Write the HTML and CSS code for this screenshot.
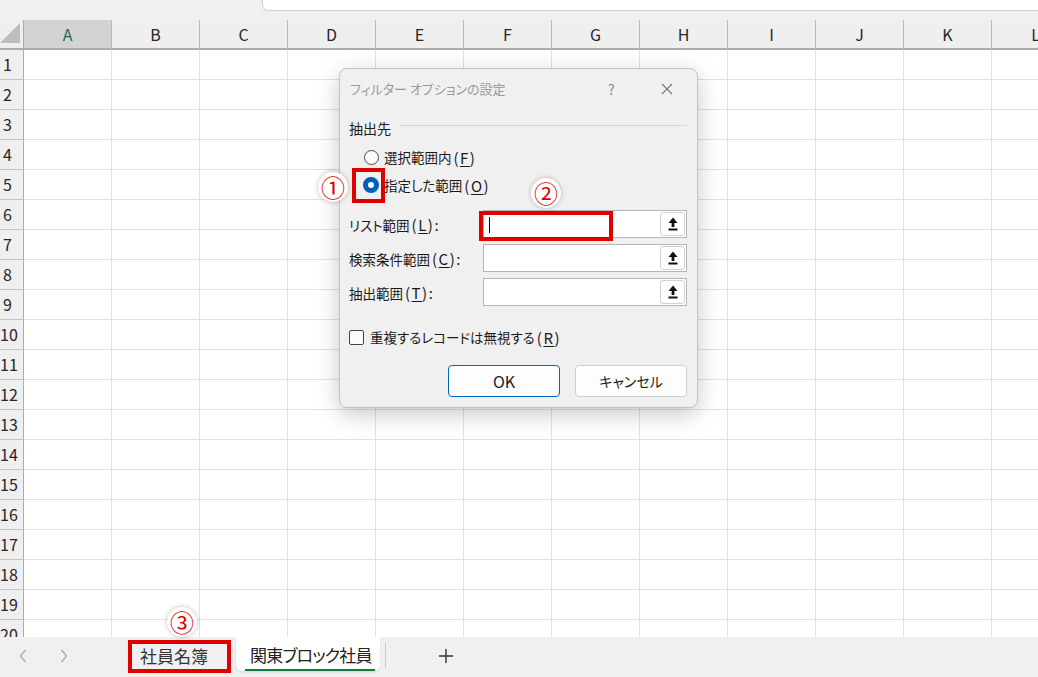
FILE: index.html
```html
<!DOCTYPE html>
<html lang="ja">
<head>
    <meta charset="UTF-8">
    <meta name="viewport" content="width=device-width, initial-scale=1.0">
    <title>フィルター オプションの設定</title>
    <link rel="stylesheet" href="styles.css">
</head>
<body>
    <div class="app">
        <div class="topbar"><div class="namebox"></div></div>
        <div class="sheet">
            <div class="row head">
                <div class="corner"><svg width="20" height="22" viewBox="0 0 20 22"><polygon points="20,0 20,20 0,20" fill="#bdbdbd"/></svg></div>
                <div class="col sel">A</div>
                <div class="col">B</div>
                <div class="col">C</div>
                <div class="col">D</div>
                <div class="col">E</div>
                <div class="col">F</div>
                <div class="col">G</div>
                <div class="col">H</div>
                <div class="col">I</div>
                <div class="col">J</div>
                <div class="col">K</div>
                <div class="col">L</div>
            </div>
            <div class="row"><div class="num"><span>1</span></div><div class="cells"></div></div>
            <div class="row"><div class="num"><span>2</span></div><div class="cells"></div></div>
            <div class="row"><div class="num"><span>3</span></div><div class="cells"></div></div>
            <div class="row"><div class="num"><span>4</span></div><div class="cells"></div></div>
            <div class="row"><div class="num"><span>5</span></div><div class="cells"></div></div>
            <div class="row"><div class="num"><span>6</span></div><div class="cells"></div></div>
            <div class="row"><div class="num"><span>7</span></div><div class="cells"></div></div>
            <div class="row"><div class="num"><span>8</span></div><div class="cells"></div></div>
            <div class="row"><div class="num"><span>9</span></div><div class="cells"></div></div>
            <div class="row"><div class="num"><span>10</span></div><div class="cells"></div></div>
            <div class="row"><div class="num"><span>11</span></div><div class="cells"></div></div>
            <div class="row"><div class="num"><span>12</span></div><div class="cells"></div></div>
            <div class="row"><div class="num"><span>13</span></div><div class="cells"></div></div>
            <div class="row"><div class="num"><span>14</span></div><div class="cells"></div></div>
            <div class="row"><div class="num"><span>15</span></div><div class="cells"></div></div>
            <div class="row"><div class="num"><span>16</span></div><div class="cells"></div></div>
            <div class="row"><div class="num"><span>17</span></div><div class="cells"></div></div>
            <div class="row"><div class="num"><span>18</span></div><div class="cells"></div></div>
            <div class="row"><div class="num"><span>19</span></div><div class="cells"></div></div>
            <div class="row"><div class="num"><span>20</span></div><div class="cells"></div></div>
        </div>
        <div class="tabbar">
            <div class="arrow"><svg width="8" height="14" viewBox="0 0 8 14"><polyline points="6.5,1 1.5,7 6.5,13" fill="none" stroke="#a8a8a8" stroke-width="1.2"/></svg></div>
            <div class="arrow"><svg width="8" height="14" viewBox="0 0 8 14"><polyline points="1.5,1 6.5,7 1.5,13" fill="none" stroke="#a8a8a8" stroke-width="1.2"/></svg></div>
            <div class="tab">社員名簿</div>
            <div class="tab active"><span>関東ブロック社員</span></div>
            <div class="tab-sep"></div>
            <div class="add"><svg width="14" height="14" viewBox="0 0 14 14"><path d="M7 0v14M0 7h14" stroke="#333" stroke-width="1.4"/></svg></div>
        </div>
    </div>

    <div class="dialog">
        <div class="dlg-title">
            <span class="dlg-name">フィルター オプションの設定</span>
            <span class="dlg-help">?</span>
            <span class="dlg-close"><svg width="12" height="12" viewBox="0 0 12 12"><path d="M1 1l10 10M11 1L1 11" stroke="#777" stroke-width="1.1"/></svg></span>
        </div>
        <div class="group">抽出先</div>
        <div class="radio-row"><span class="radio"></span>選択範囲内<span class="key">(<u>F</u>)</span></div>
        <div class="radio-row"><span class="radio on"></span>指定した範囲<span class="key">(<u>O</u>)</span></div>
        <div class="field first">
            <label>リスト範囲<span class="key">(<u>L</u>):</span></label>
            <div class="ref"><span class="caret"></span><span class="ref-btn"><svg width="10" height="14" viewBox="0 0 10 14"><polygon points="5,0.5 9.5,6 6.4,6 6.4,10 3.6,10 3.6,6 0.5,6" fill="#111"/><rect x="0.5" y="11.5" width="9" height="2" fill="#111"/></svg></span></div>
        </div>
        <div class="field">
            <label>検索条件範囲<span class="key">(<u>C</u>):</span></label>
            <div class="ref"><span class="ref-btn"><svg width="10" height="14" viewBox="0 0 10 14"><polygon points="5,0.5 9.5,6 6.4,6 6.4,10 3.6,10 3.6,6 0.5,6" fill="#111"/><rect x="0.5" y="11.5" width="9" height="2" fill="#111"/></svg></span></div>
        </div>
        <div class="field">
            <label>抽出範囲<span class="key">(<u>T</u>):</span></label>
            <div class="ref"><span class="ref-btn"><svg width="10" height="14" viewBox="0 0 10 14"><polygon points="5,0.5 9.5,6 6.4,6 6.4,10 3.6,10 3.6,6 0.5,6" fill="#111"/><rect x="0.5" y="11.5" width="9" height="2" fill="#111"/></svg></span></div>
        </div>
        <div class="check-row"><span class="check"></span>重複するレコードは無視する<span class="key">(<u>R</u>)</span></div>
        <div class="buttons">
            <button class="btn ok">OK</button>
            <button class="btn">キャンセル</button>
        </div>
    </div>

    <div class="mark mark-radio"></div>
    <div class="mark mark-list"></div>
    <div class="mark mark-tab"></div>
    <span class="badge badge-1">①</span>
    <span class="badge badge-2">②</span>
    <span class="badge badge-3">③</span>
</body>
</html>
```

FILE: styles.css
```css
body {
    margin: 0;
    width: 1038px;
    height: 677px;
    overflow: hidden;
    position: relative;
    background: #fff;
    font-family: "Noto Sans CJK JP", "Noto Sans", sans-serif;
    color: #1a1a1a;
}
.app {
    display: flex;
    flex-direction: column;
    height: 677px;
}
.topbar {
    height: 20px;
    flex: none;
    background: #f0f0f0;
}
.namebox {
    margin-left: 262px;
    height: 11px;
    background: #fff;
    border-left: 1px solid #d1d1d1;
    border-bottom: 1px solid #d1d1d1;
    border-bottom-left-radius: 6px;
    box-sizing: border-box;
}

/* grid */
.sheet {
    flex: 1;
    overflow: hidden;
}
.row {
    display: flex;
    height: 30px;
}
.head {
    background: #efefef;
}
.corner {
    width: 24px;
    flex: none;
    box-sizing: border-box;
    border-right: 1px solid #ababab;
    border-bottom: 2px solid #ababab;
    display: flex;
    align-items: flex-end;
    justify-content: flex-end;
    padding: 0 3px 3px 0;
}
.col {
    width: 88px;
    flex: none;
    box-sizing: border-box;
    border-right: 1px solid #b8b8b8;
    border-bottom: 2px solid #ababab;
    text-align: center;
    font-size: 16px;
    line-height: 28px;
    color: #262626;
}
.col.sel {
    background: #d3d3d3;
    color: #1f6a48;
}
.num {
    width: 24px;
    flex: none;
    box-sizing: border-box;
    background: #efefef;
    border-right: 1px solid #ababab;
    border-bottom: 1px solid #c4c4c4;
    font-size: 16px;
    line-height: 29px;
    color: #262626;
}
.num span {
    display: block;
    width: 15px;
    text-align: center;
    white-space: nowrap;
}
.cells {
    flex: 1;
    box-sizing: border-box;
    border-bottom: 1px solid #e1e1e1;
    background: repeating-linear-gradient(to right, transparent 0 87px, #e1e1e1 87px 88px);
}

/* sheet tabs */
.tabbar {
    height: 40px;
    flex: none;
    display: flex;
    align-items: flex-start;
    background: #f0f0f0;
    padding-left: 2px;
    font-feature-settings: "palt";
}
.arrow {
    width: 41px;
    height: 38px;
    display: flex;
    align-items: center;
    justify-content: center;
}
.tab {
    margin-left: 44px;
    width: 102px;
    height: 34px;
    margin-top: 2px;
    box-sizing: border-box;
    padding-left: 12px;
    font-size: 17px;
    line-height: 34px;
    color: #333;
}
.tab.active {
    margin-left: 6px;
    margin-top: 0;
    width: 144px;
    height: 34px;
    padding-left: 9px;
    background: #fff;
    border-radius: 0 0 6px 6px;
    box-shadow: 0 1px 2px rgba(0,0,0,0.12);
    line-height: 36px;
    color: #222;
    letter-spacing: -0.8px;
}
.tab.active span {
    display: inline-block;
    padding: 0 3px 0 5px;
    line-height: 28px;
    border-bottom: 2px solid #107c41;
}
.tab-sep {
    width: 1px;
    height: 25px;
    margin: 6px 0 0 5px;
    background: #c8c8c8;
}
.add {
    margin-left: 40px;
    width: 40px;
    height: 38px;
    display: flex;
    align-items: center;
    justify-content: center;
}

/* dialog */
.dialog {
    position: absolute;
    left: 339px;
    top: 68px;
    width: 359px;
    height: 340px;
    box-sizing: border-box;
    padding: 0 10px 0 9px;
    background: #f0f0f0;
    border: 1px solid #c2c2c2;
    border-radius: 8px;
    box-shadow: 0 6px 22px rgba(0,0,0,0.22);
    font-size: 13.5px;
    font-feature-settings: "palt";
}
.key {
    font-size: 15px;
    letter-spacing: 1.5px;
    margin-left: 2px;
}
.key u {
    text-underline-offset: 2px;
}
.dlg-title {
    height: 39px;
    display: flex;
    align-items: center;
    font-size: 13px;
}
.dlg-name {
    flex: 1;
    color: #9a9a9a;
    padding-left: 1px;
}
.dlg-help {
    color: #8a8a8a;
    font-size: 14px;
    width: 20px;
    margin-right: 29px;
}
.dlg-close {
    width: 20px;
    display: flex;
    justify-content: center;
    margin-right: 10px;
}
.group {
    margin-top: 10px;
    height: 20px;
    display: flex;
    align-items: center;
    gap: 8px;
    font-size: 14px;
}
.group::after {
    content: "";
    flex: 1;
    height: 1px;
    background: #d6d6d6;
    margin-top: -5px;
}
.radio-row {
    height: 28px;
    display: flex;
    align-items: center;
    padding-left: 15px;
}
.group + .radio-row {
    margin-top: 5px;
}
.radio {
    width: 15px;
    height: 15px;
    border: 1px solid #4a4a4a;
    border-radius: 50%;
    margin-right: 5px;
    box-sizing: border-box;
    background: #fbfbfb;
}
.radio.on {
    width: 16px;
    height: 16px;
    margin-left: -1px;
    margin-right: 5px;
    border: 5.5px solid #005fb8;
    background: #fff;
}
.field {
    display: flex;
    align-items: center;
    height: 28px;
    margin-top: 6px;
}
.field.first {
    margin-top: 11px;
}
.field label {
    width: 134px;
}
.ref {
    flex: 1;
    height: 28px;
    box-sizing: border-box;
    background: #fff;
    border: 1px solid #b5b5b5;
    display: flex;
    align-items: center;
    justify-content: flex-end;
    position: relative;
    padding-right: 1px;
}
.caret {
    position: absolute;
    left: 5px;
    top: 6px;
    width: 1px;
    height: 16px;
    background: #000;
}
.ref-btn {
    width: 25px;
    height: 24px;
    box-sizing: border-box;
    border: 1px solid #d2d2d2;
    border-radius: 3px;
    background: #fdfdfd;
    display: flex;
    align-items: center;
    justify-content: center;
}
.check-row {
    height: 28px;
    margin-top: 17px;
    display: flex;
    align-items: center;
}
.check {
    width: 15px;
    height: 15px;
    box-sizing: border-box;
    border: 1px solid #444;
    border-radius: 2px;
    background: #fbfbfb;
    margin-right: 6px;
}
.buttons {
    margin-top: 14px;
    display: flex;
    justify-content: flex-end;
    gap: 15px;
}
.btn {
    width: 112px;
    height: 32px;
    box-sizing: border-box;
    background: #fdfdfd;
    border: 1px solid #d0d0d0;
    border-radius: 4px;
    font-family: inherit;
    font-size: 14px;
    font-feature-settings: "palt";
    color: #1a1a1a;
}
.btn.ok {
    border-color: #0067c0;
    font-size: 16px;
}

/* annotations */
.mark {
    position: absolute;
    box-sizing: border-box;
    border: 4px solid #e00000;
}
.mark-radio {
    left: 352px;
    top: 168px;
    width: 33px;
    height: 35px;
}
.mark-list {
    left: 479px;
    top: 211px;
    width: 134px;
    height: 30px;
}
.mark-tab {
    left: 128px;
    top: 640px;
    width: 103px;
    height: 33px;
}
.badge {
    position: absolute;
    width: 30px;
    height: 30px;
    border-radius: 50%;
    background: #fff;
    box-shadow: 0 0 5px rgba(0,0,0,0.25);
    color: #e00000;
    font-size: 24px;
    line-height: 30px;
    text-align: center;
}
.badge-1 { left: 318px; top: 172px; }
.badge-2 { left: 531px; top: 178px; }
.badge-3 { left: 167px; top: 607px; }
```
